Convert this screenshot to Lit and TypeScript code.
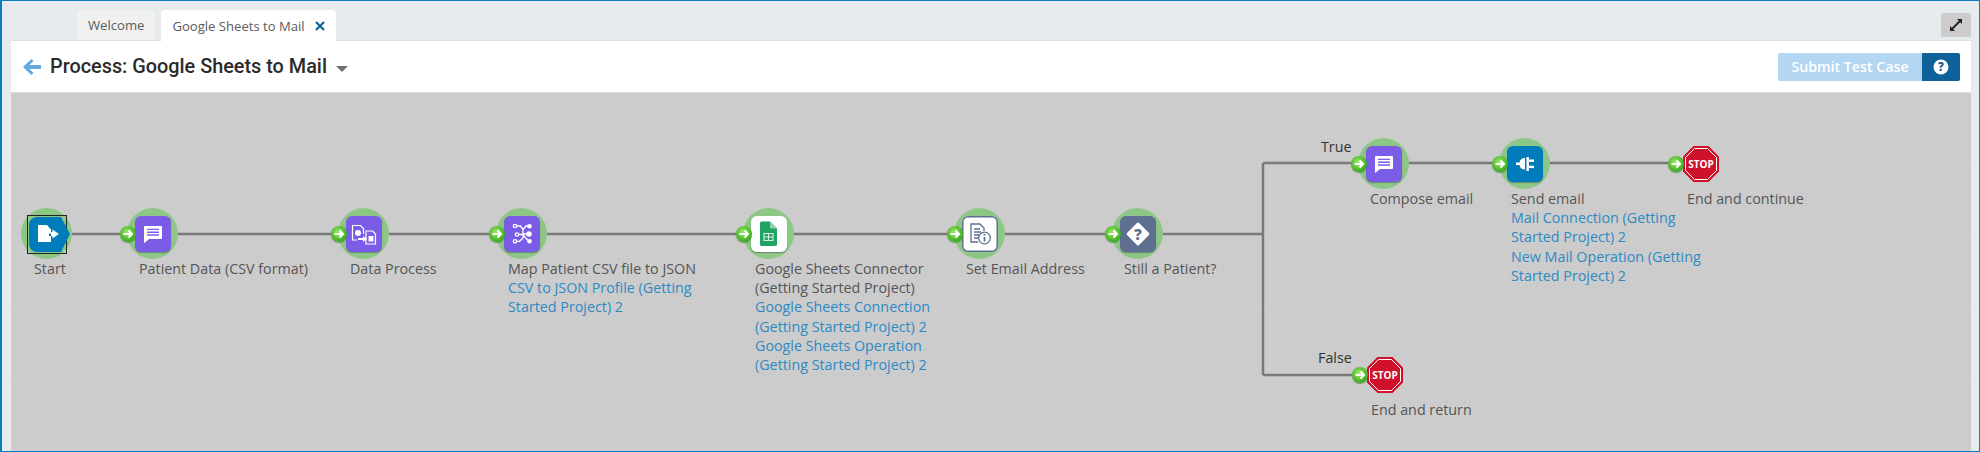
import { LitElement, css, html, svg, nothing } from "lit";
import { customElement } from "lit/decorators.js";

type Kind = "chat" | "data" | "map" | "sheets" | "setprop" | "decision" | "plug" | "stop";

interface FlowNode {
  x: number;
  y: number;
  kind: Kind;
  label: string;
  links?: string[];
}

// canvas-local coordinates of the 36px icon squares
const NODES: FlowNode[] = [
  { x: 124, y: 124, kind: "chat", label: "Patient Data (CSV format)" },
  { x: 335, y: 124, kind: "data", label: "Data Process" },
  {
    x: 493,
    y: 124,
    kind: "map",
    label: "Map Patient CSV file to JSON",
    links: ["CSV to JSON Profile (Getting Started Project) 2"],
  },
  {
    x: 740,
    y: 124,
    kind: "sheets",
    label: "Google Sheets Connector (Getting Started Project)",
    links: ["Google Sheets Connection (Getting Started Project) 2", "Google Sheets Operation (Getting Started Project) 2"],
  },
  { x: 951, y: 124, kind: "setprop", label: "Set Email Address" },
  { x: 1109, y: 124, kind: "decision", label: "Still a Patient?" },
  { x: 1355, y: 54, kind: "chat", label: "Compose email" },
  {
    x: 1496,
    y: 54,
    kind: "plug",
    label: "Send email",
    links: ["Mail Connection (Getting Started Project) 2", "New Mail Operation (Getting Started Project) 2"],
  },
  { x: 1672, y: 54, kind: "stop", label: "End and continue" },
  { x: 1356, y: 265, kind: "stop", label: "End and return" },
];

const WIRES = "M40 142H1252M1252 71V283M1252 71H1690M1252 283H1365";

const ICONS: Record<Kind, unknown> = {
  chat: svg`<path fill="#fff" d="M10 10h16a1 1 0 0 1 1 1v11a1 1 0 0 1-1 1H14l-4 3.5a.5.5 0 0 1-1-.4V11a1 1 0 0 1 1-1z"/>
    <path stroke="#7a5ce6" stroke-width="1.4" d="M12 13.4h12M12 16.2h12M12 19h12"/>`,
  data: svg`<g fill="none" stroke="#fff" stroke-width="1.2">
      <path d="M11 24H6.500V9.500h8l3 3V18"/>
      <path d="M20 15h6.500l3 3v10H20z"/>
    </g>
    <circle cx="12" cy="17" r="3" fill="#fff"/>
    <rect x="22.500" y="20" width="5" height="5.500" fill="#fff"/>
    <path fill="#fff" d="M12 22h5v-2l4 3-4 3v-2h-5z"/>`,
  map: svg`<g fill="none" stroke="#fff" stroke-width="1.300">
      <path d="M12.500 10h4l2.500 3.500v8.500L15.500 25.300H12.500M14.500 18.500H19M19 13.500L22 10H25M19 18H25M19 19l5 5.500"/>
      <circle cx="11" cy="10" r="1.700"/>
      <circle cx="13" cy="18.500" r="1.700"/>
      <circle cx="11" cy="25.300" r="1.700"/>
    </g>
    <circle cx="25.500" cy="10.300" r="2.300" fill="#fff"/>
    <circle cx="25" cy="18" r="2.700" fill="#fff"/>
    <circle cx="25.500" cy="25.300" r="2.300" fill="#fff"/>`,
  sheets: svg`<path fill="#1fa463" d="M9 7a1.500 1.500 0 0 1 1.500-1.500H19L26 12.500V28.500A1.500 1.500 0 0 1 24.500 30H10.500A1.500 1.500 0 0 1 9 28.500z"/>
    <path fill="#8ed1ae" d="M19 5.500L26 12.500H20a1 1 0 0 1-1-1z"/>
    <path fill="none" stroke="#d5eee0" stroke-width="1.100" d="M13 17.500h9v7h-9zM13 21h9M17.500 17.500v7"/>`,
  setprop: svg`<g fill="none" stroke="#5f6f92" stroke-width="1.300">
      <path d="M16 26H9V8h9l4 4v3"/>
      <path d="M12 13h6M12 16h7M12 19h5M12 22h4"/>
      <circle cx="22.500" cy="22" r="5.800"/>
    </g>
    <path stroke="#5f6f92" stroke-width="1.800" d="M22.500 21v4.500M22.500 18v1.600"/>`,
  decision: svg`<rect x="9.500" y="9.500" width="17" height="17" rx="1.500" fill="#fff" transform="rotate(45 18 18)"/>
    <text class="glyph" x="18" y="23.500" font-size="15" fill="#5f6f92" text-anchor="middle">?</text>`,
  plug: svg`<path fill="#fff" d="M9 16.500h3.500a5.500 5.500 0 0 1 5.500-4.500v11.500a5.500 5.500 0 0 1-5.500-4.500H9z"/>
    <rect x="19.500" y="11" width="2.400" height="14" fill="#fff"/>
    <rect x="22" y="13.500" width="5" height="2.400" fill="#fff"/>
    <rect x="22" y="19.700" width="5" height="2.400" fill="#fff"/>`,
  stop: svg`<path fill="#d0112b" d="M10.500 0h15L36 10.500v15L25.500 36h-15L0 25.500v-15z"/>
    <path fill="none" stroke="#fff" stroke-width="1" d="M11.500 2.500h13l9 9v13l-9 9h-13l-9-9v-13z"/>
    <text class="stop-text" x="18" y="21.800" text-anchor="middle">STOP</text>`,
};

@customElement("app-root")
export class AppRoot extends LitElement {
  static styles = css`
    :host {
      display: block;
      font-family: "Open Sans", "Noto Sans", sans-serif;
    }
    .shell {
      box-sizing: border-box;
      width: 1980px;
      height: 452px;
      display: flex;
      flex-direction: column;
      background: #e6ebee;
      border: solid #0a7cc0;
      border-width: 1px 1px 1px 2px;
      padding: 0 8px 0 9px;
      overflow: hidden;
    }
    .tabbar {
      height: 39px;
      flex: none;
      display: flex;
      align-items: flex-end;
      gap: 6px;
      padding-left: 66px;
      border-bottom: 1px solid #dde1e4;
    }
    .tab {
      height: 30px;
      display: flex;
      align-items: center;
      gap: 10px;
      padding: 0 11px;
      font-size: 13.100px;
      color: #5b5b5b;
      background: #f0f0f0;
      border-radius: 4px 4px 0 0;
    }
    .tab.active {
      background: #fff;
      margin-bottom: -1px;
      height: 31px;
    }
    .tab svg {
      width: 10px;
      height: 10px;
    }
    .expand {
      margin: 0 0 3px auto;
      width: 30px;
      height: 24px;
      background: #cccccc;
      border-radius: 2px;
      display: flex;
      align-items: center;
      justify-content: center;
    }
    .panel {
      flex: 1;
      min-height: 0;
      display: flex;
      flex-direction: column;
    }
    .header {
      flex: none;
      height: 51px;
      background: #fff;
      display: flex;
      align-items: center;
      padding: 0 11px 0 12px;
    }
    .back {
      width: 18px;
      height: 16px;
      margin-right: 9px;
    }
    .title {
      font-family: Roboto, sans-serif;
      font-size: 19.850px;
      font-weight: 500;
      color: #2b2b2b;
    }
    .caret {
      width: 0;
      height: 0;
      margin: 5px 0 0 9px;
      border: 6px solid transparent;
      border-top: 6px solid #707070;
      border-bottom: 0;
    }
    .actions {
      margin-left: auto;
      display: flex;
      height: 28px;
    }
    .submit {
      width: 144px;
      display: flex;
      align-items: center;
      justify-content: center;
      background: #b3d6f2;
      color: #fff;
      font-size: 14.200px;
      font-weight: 600;
      border-radius: 2px 0 0 2px;
    }
    .help {
      width: 38px;
      display: flex;
      align-items: center;
      justify-content: center;
      background: #0f6199;
      border-radius: 0 2px 2px 0;
    }
    .canvas {
      flex: 1;
      position: relative;
      background-color: #cccccc;
      background-image: radial-gradient(circle, #c6c6c6 0.8px, transparent 1.200px);
      background-size: 9px 9px;
      box-shadow: inset 0 1px 0 #dcdcdc;
      overflow: hidden;
    }
    .wires {
      position: absolute;
      left: 0;
      top: 0;
      width: 100%;
      height: 100%;
    }
    .node {
      position: absolute;
      width: 36px;
      height: 36px;
    }
    .halo {
      position: absolute;
      left: -8px;
      top: -8px;
      width: 51px;
      height: 51px;
      border-radius: 50%;
      background: radial-gradient(circle, #8dc786 0, #8dc786 68%, #a9cfa3 86%, rgba(180, 210, 175, 0.5) 100%);
    }
    .square {
      position: absolute;
      inset: 0;
      border-radius: 6px;
      box-shadow: 0 1px 1px rgba(60, 60, 90, 0.45);
    }
    .square svg {
      display: block;
      width: 36px;
      height: 36px;
    }
    .square.chat,
    .square.data,
    .square.map {
      background: #7a5ce6;
    }
    .square.sheets {
      background: #fff;
    }
    .square.setprop {
      background: #fff;
      box-shadow: inset 0 0 0 1.500px #5f6f92;
    }
    .square.decision {
      background: #5f6f92;
    }
    .square.plug {
      background: #007cba;
    }
    .square.stop {
      box-shadow: none;
    }
    .port {
      position: absolute;
      left: -15.500px;
      top: 9.500px;
      width: 16px;
      height: 16px;
      border-radius: 50%;
      background: radial-gradient(circle at 45% 40%, #a6ec70, #45b526 60%, #258a18);
      box-shadow: 0 1px 1px rgba(40, 90, 30, 0.5);
      display: flex;
      align-items: center;
      justify-content: center;
    }
    .port svg {
      width: 12px;
      height: 12px;
    }
    .label {
      position: absolute;
      left: 4px;
      top: 43px;
      width: 196px;
      font-size: 14.300px;
      line-height: 19.200px;
      color: #555555;
    }
    .label a {
      display: block;
      color: #2e8ac4;
      text-decoration: none;
    }
    .branch {
      position: absolute;
      font-size: 14.300px;
      line-height: 19px;
      color: #333333;
    }
    .start {
      position: absolute;
      left: 18px;
      top: 124px;
      width: 36px;
      height: 36px;
    }
    .start svg {
      position: absolute;
      left: 0;
      top: 0;
      overflow: visible;
      width: 36px;
      height: 36px;
    }
    .start .sel {
      position: absolute;
      left: -2px;
      top: -1px;
      width: 38px;
      height: 37px;
      border: 1px solid #222;
    }
    .start .label {
      left: 5px;
    }
    .glyph {
      font-family: "Open Sans", sans-serif;
      font-weight: 800;
    }
    .stop-text {
      font-family: "Open Sans", sans-serif;
      font-weight: 700;
      font-size: 10px;
      fill: #fff;
    }
  `;

  renderNode(n: FlowNode) {
    return html`<div class="node" style="left:${n.x}px;top:${n.y}px">
      ${n.kind === "stop" ? nothing : html`<div class="halo"></div>`}
      <div class="square ${n.kind}">
        <svg viewBox="0 0 36 36">${ICONS[n.kind]}</svg>
      </div>
      <div class="port">
        <svg viewBox="0 0 12 12"><path fill="none" stroke="#fff" stroke-width="2" d="M1.500 6h8M6.500 2.500L10 6l-3.500 3.500" /></svg>
      </div>
      <div class="label">
        ${n.label}${(n.links ?? []).map((l) => html`<a>${l}</a>`)}
      </div>
    </div>`;
  }

  render() {
    return html`<div class="shell">
      <div class="tabbar">
        <div class="tab">Welcome</div>
        <div class="tab active">
          Google Sheets to Mail
          <svg viewBox="0 0 10 10"><path stroke="#0f6199" stroke-width="2.200" d="M1 1l8 8M9 1l-8 8" /></svg>
        </div>
        <div class="expand">
          <svg width="14" height="14" viewBox="0 0 14 14">
            <path fill="none" stroke="#222" stroke-width="1.800" d="M3 11l8-8" />
            <path fill="#222" d="M8 1h5v5zM1 8v5h5z" />
          </svg>
        </div>
      </div>
      <div class="panel">
        <div class="header">
          <svg class="back" viewBox="0 0 18 16">
            <path fill="#64a8e0" d="M8.500 0l2 2-4 4H18v4H6.500l4 4-2 2L0 8z" />
          </svg>
          <span class="title">Process: Google Sheets to Mail</span>
          <span class="caret"></span>
          <div class="actions">
            <div class="submit">Submit Test Case</div>
            <div class="help">
              <svg width="16" height="16" viewBox="0 0 16 16">
                <circle cx="8" cy="8" r="7.500" fill="#fff" />
                <text class="glyph" x="8" y="12" font-size="11.500" fill="#0f6199" text-anchor="middle">?</text>
              </svg>
            </div>
          </div>
        </div>
        <div class="canvas">
          <svg class="wires"><path d=${WIRES} fill="none" stroke="#7a7a7a" stroke-width="2.500" /></svg>
          <div class="start">
            <div class="halo"></div>
            <div class="sel"></div>
            <svg viewBox="0 0 36 36">
              <path fill="#007cba" d="M8 1H32L41 18 32 36H8a8 8 0 0 1-8-8V9a8 8 0 0 1 8-8z" />
              <path fill="#fff" d="M9 9h9l4 4.500v4H20v2.500h2v6H9z" />
              <path fill="#fff" d="M22 16h1.500l0-2.500L30 18l-6.500 4.500V20H22z" />
            </svg>
            <div class="label">Start</div>
          </div>
          ${NODES.map((n) => this.renderNode(n))}
          <div class="branch" style="left:1310px;top:45px">True</div>
          <div class="branch" style="left:1307px;top:256px">False</div>
        </div>
      </div>
    </div>`;
  }
}
